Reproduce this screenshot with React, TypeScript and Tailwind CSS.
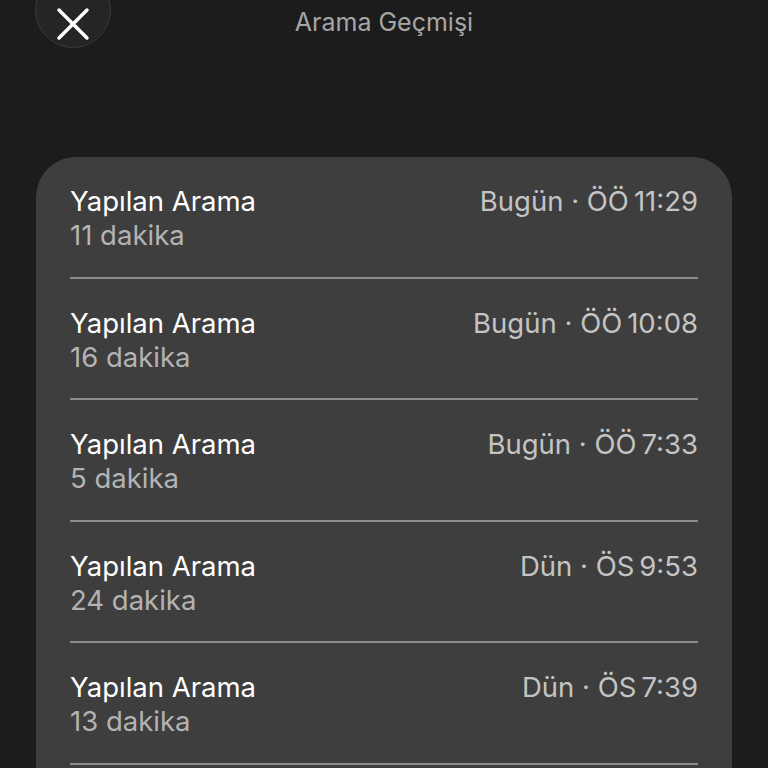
import React from "react";

const rows = [
  { d: "11 dakika", t: "Bugün · ÖÖ\u200911:29" },
  { d: "16 dakika", t: "Bugün · ÖÖ\u200910:08" },
  { d: "5 dakika", t: "Bugün · ÖÖ\u20097:33" },
  { d: "24 dakika", t: "Dün · ÖS\u20099:53" },
  { d: "13 dakika", t: "Dün · ÖS\u20097:39" },
];

export default function App() {
  return (
    <div
      className="w-[768px] h-[768px] overflow-hidden bg-[#1c1c1c] relative"
      style={{ fontFamily: "Inter, 'Noto Sans', sans-serif" }}
    >
      <div className="absolute left-[35px] top-[-28px] w-[76px] h-[76px] rounded-full bg-[#252525] border border-[#3a3a3a] flex items-center justify-center">
        <svg width="34" height="34" viewBox="0 0 34 34" className="mt-[27px]">
          <path d="M3 3 L31 31 M31 3 L3 31" stroke="#ffffff" strokeWidth="3.5" strokeLinecap="round" />
        </svg>
      </div>
      <div className="h-[46px] flex items-center justify-center text-[25px] text-[#a6a6a6]">
        Arama Geçmişi
      </div>
      <div className="mt-[111px] mx-[36px] rounded-t-[40px] bg-[#3e3e3e] px-[34px] h-[700px]">
        {rows.map((r, i) => (
          <div key={i} className="h-[121.5px] border-b-2 border-[#8c8c8c] flex justify-between pt-[27px]">
            <div className="flex flex-col">
              <span className="text-[27.5px] leading-[34px] text-white">Yapılan Arama</span>
              <span className="text-[27.5px] leading-[34px] text-[#b3b3b3]">{r.d}</span>
            </div>
            <span className="text-[27.5px] leading-[34px] text-[#c4c4c4]">{r.t}</span>
          </div>
        ))}
      </div>
    </div>
  );
}
